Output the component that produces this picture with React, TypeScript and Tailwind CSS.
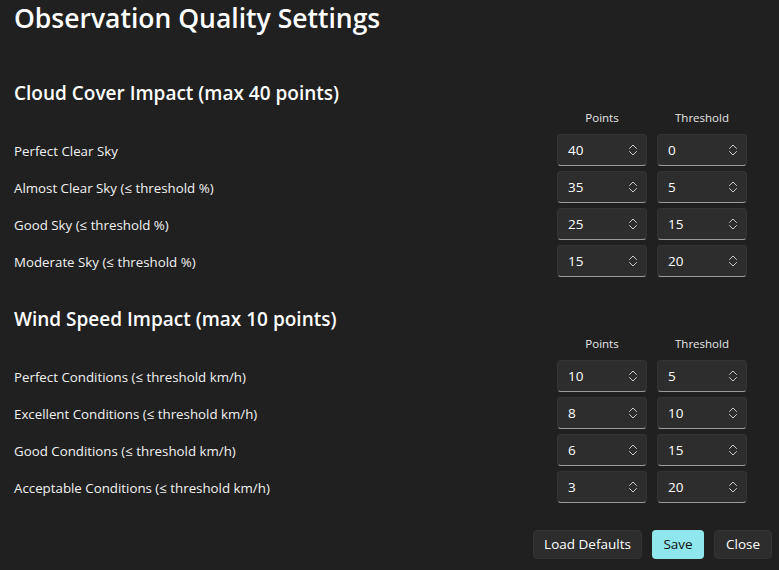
const font = { fontFamily: '"Segoe UI", "Open Sans", "Noto Sans", sans-serif' };

type Row = { label: string; points: number; threshold: number };

const cloudRows: Row[] = [
  { label: "Perfect Clear Sky", points: 40, threshold: 0 },
  { label: "Almost Clear Sky (≤ threshold %)", points: 35, threshold: 5 },
  { label: "Good Sky (≤ threshold %)", points: 25, threshold: 15 },
  { label: "Moderate Sky (≤ threshold %)", points: 15, threshold: 20 },
];

const windRows: Row[] = [
  { label: "Perfect Conditions (≤ threshold km/h)", points: 10, threshold: 5 },
  { label: "Excellent Conditions (≤ threshold km/h)", points: 8, threshold: 10 },
  { label: "Good Conditions (≤ threshold km/h)", points: 6, threshold: 15 },
  { label: "Acceptable Conditions (≤ threshold km/h)", points: 3, threshold: 20 },
];

function Spinner({ value }: { value: number }) {
  return (
    <div className="flex h-[32px] w-[90px] items-center justify-between rounded-[4px] border border-[#343434] border-b-[#9a9a9a] bg-[#2d2d2d] pl-[10px] pr-[9px] text-[13.5px] text-white">
      <span>{value}</span>
      <svg width="8" height="12" viewBox="0 0 8 12" fill="none" stroke="#c9c9c9" strokeWidth="1" strokeLinecap="round" strokeLinejoin="round">
        <path d="M0.5 4.5 L4 1 L7.5 4.5" />
        <path d="M0.5 7.5 L4 11 L7.5 7.5" />
      </svg>
    </div>
  );
}

function Section({ title, rows }: { title: string; rows: Row[] }) {
  return (
    <section className="flex flex-col">
      <h2 className="h-[28px] text-[19px] font-semibold leading-[28px] text-white">{title}</h2>
      <div className="mt-[3px] grid grid-cols-[1fr_90px_90px] gap-x-[10px] pr-[18px]">
        <div />
        <div className="h-[16px] text-center text-[11.5px] leading-[16px] text-[#e6e6e6]">Points</div>
        <div className="h-[16px] text-center text-[11.5px] leading-[16px] text-[#e6e6e6]">Threshold</div>
      </div>
      <div className="mt-[8px] grid grid-cols-[1fr_90px_90px] gap-x-[10px] gap-y-[5px] pr-[18px]">
        {rows.map((r) => (
          <div key={r.label} className="contents">
            <div className="flex items-center pt-[3px] text-[13.3px] text-[#f2f2f2]">{r.label}</div>
            <Spinner value={r.points} />
            <Spinner value={r.threshold} />
          </div>
        ))}
      </div>
    </section>
  );
}

export default function App() {
  return (
    <div className="h-[570px] w-[779px] overflow-hidden bg-[#202020] pl-[14px] pr-[14px]" style={font}>
      <h1 className="h-[37px] text-[26.5px] font-semibold leading-[37px] text-white">Observation Quality Settings</h1>
      <div className="mt-[42px]">
        <Section title="Cloud Cover Impact (max 40 points)" rows={cloudRows} />
      </div>
      <div className="mt-[28px]">
        <Section title="Wind Speed Impact (max 10 points)" rows={windRows} />
      </div>
      <div className="mt-[27px] flex justify-end gap-[10px]">
        <button className="h-[29px] w-[109px] rounded-[4px] border border-[#333] bg-[#2d2d2d] text-[13.5px] text-white">Load Defaults</button>
        <button className="h-[29px] w-[52px] rounded-[4px] bg-[#8fe6ec] text-[13.5px] text-[#111]">Save</button>
        <button className="-mr-[7px] h-[29px] w-[58px] rounded-[4px] border border-[#333] bg-[#2d2d2d] text-[13.5px] text-white">Close</button>
      </div>
    </div>
  );
}
